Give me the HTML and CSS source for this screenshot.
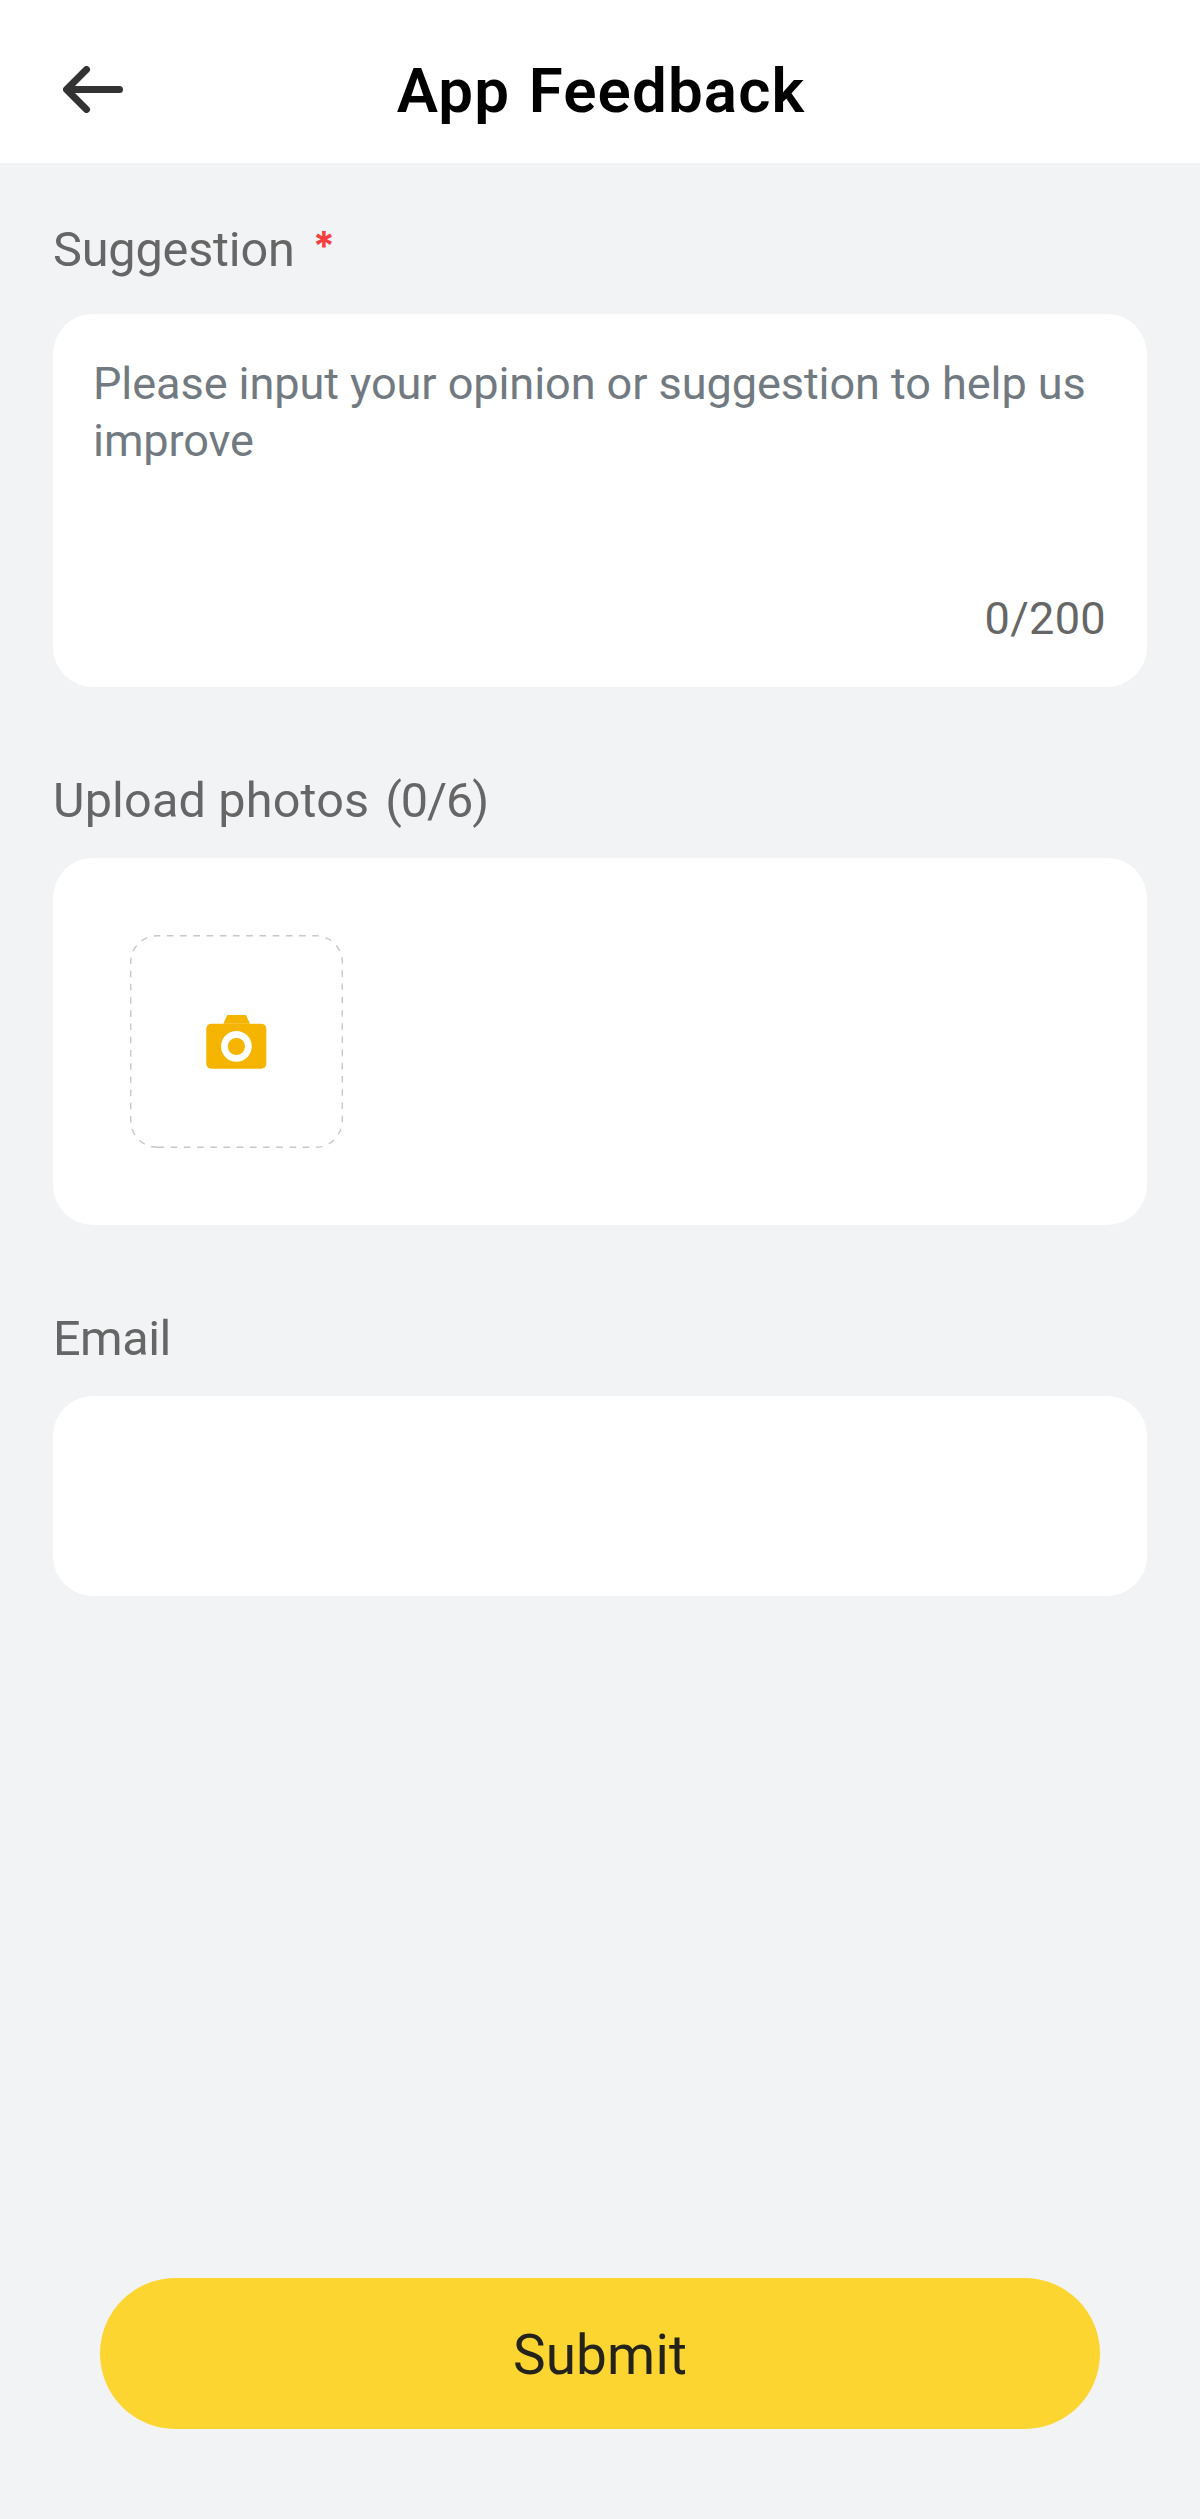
FILE: index.html
```html
<!DOCTYPE html>
<html lang="en">
<head>
<meta charset="utf-8">
<title>App Feedback</title>
<link rel="stylesheet" href="styles.css">
</head>
<body>
<div class="screen">
  <header class="header">
    <svg class="back" viewBox="0 0 60 47" fill="none" stroke="#333" stroke-width="7" stroke-linecap="round" stroke-linejoin="round" role="img" aria-label="Back">
      <path d="M23.5 3.5 3.5 23.5l20 20M5 23.5h51.5"/>
      <path d="M3.5 23.5 11 19v9z" fill="#333" stroke-width="2"/>
    </svg>
    <h1 class="title">App Feedback</h1>
  </header>

  <main class="form">
    <div class="label label-first"><span class="label-suggestion">Suggestion</span><span class="required">*</span></div>
    <section class="card opinion">
      <p class="placeholder">Please input your opinion or suggestion to help us improve</p>
      <p class="counter">0/200</p>
    </section>

    <div class="label"><span class="label-upload">Upload photos</span><span class="label-count">(0/6)</span></div>
    <section class="card photos">
      <svg class="add-photo" viewBox="0 0 213 213" role="img" aria-label="Add photo">
        <path d="M27.4 212.3A26.7 26.7 0 0 1 .7 185.6V27.4A26.7 26.7 0 0 1 27.4.7H185.6A26.7 26.7 0 0 1 212.3 27.4V185.6A26.7 26.7 0 0 1 185.6 212.3Z" fill="none" stroke="#c8c8c8" stroke-width="1.4" pathLength="121" stroke-dasharray="1 1"/>
        <path d="M97.3 80H116L120 88.7H93.3Z" fill="#f4b400"/>
        <rect x="76.3" y="88.7" width="60" height="45" rx="5" fill="#f4b400"/>
        <circle cx="106.4" cy="111.3" r="12" fill="none" stroke="#fff" stroke-width="6.8"/>
      </svg>
    </section>

    <div class="label label-email">Email</div>
    <section class="card email"></section>
  </main>

  <button class="submit" type="button">Submit</button>
</div>
</body>
</html>
```
FILE: styles.css
```css
* { box-sizing: border-box; margin: 0; }

body {
  background: #f1f3f5;
  font-family: Roboto, "Liberation Sans", sans-serif;
}

.screen {
  display: flex;
  flex-direction: column;
  height: 2519px;
}

.header {
  display: grid;
  grid-template-columns: 60px 1fr 60px;
  align-items: center;
  height: 163px;
  padding: 18px 63px 0;
  background: #fff;
}

.back {
  width: 60px;
  height: 47px;
  margin-top: -3px;
}

.title {
  color: #000;
  font-size: 61.8px;
  font-weight: 600;
  line-height: 72px;
  letter-spacing: 1.15px;
  word-spacing: 2px;
  text-align: center;
  padding-left: 2px;
}

.form {
  flex: 1;
  padding: 0 53px;
}

.label {
  display: flex;
  align-items: baseline;
  margin: 84px 0 27px;
  color: #666;
  font-size: 48.6px;
  line-height: 60px;
}

.label-first { margin: 57px 0 34px; }
.label-suggestion { letter-spacing: -0.16px; }

.required {
  margin-left: 18px;
  color: #fa3c3c;
  font-family: Inter, sans-serif;
  font-size: 40px;
  font-weight: 700;
  line-height: 1;
  transform: translateY(-6px);
}

.label-upload { letter-spacing: 0.16px; }
.label-count { margin-left: 16px; letter-spacing: -1.07px; }
.label-email { letter-spacing: -0.5px; }

.card {
  background: #fff;
  border-radius: 40px;
}

.opinion {
  display: flex;
  flex-direction: column;
  justify-content: space-between;
  height: 373px;
  padding: 41px 41px 40px 40px;
  font-size: 45.1px;
  line-height: 57px;
}

.placeholder {
  color: #717981;
  letter-spacing: -0.09px;
}

.counter {
  color: #666;
  letter-spacing: 0.3px;
  text-align: right;
}

.photos {
  height: 367px;
  padding: 77px;
}

.add-photo {
  display: block;
  width: 213px;
  height: 213px;
}

.email { height: 200px; }

.submit {
  height: 151px;
  margin: 0 100px 90px;
  padding: 3px 0 0;
  border: 0;
  border-radius: 76px;
  background: #fdd531;
  color: #24231a;
  font: 400 54.9px/64px Roboto, "Liberation Sans", sans-serif;
  letter-spacing: 0.16px;
}
```
